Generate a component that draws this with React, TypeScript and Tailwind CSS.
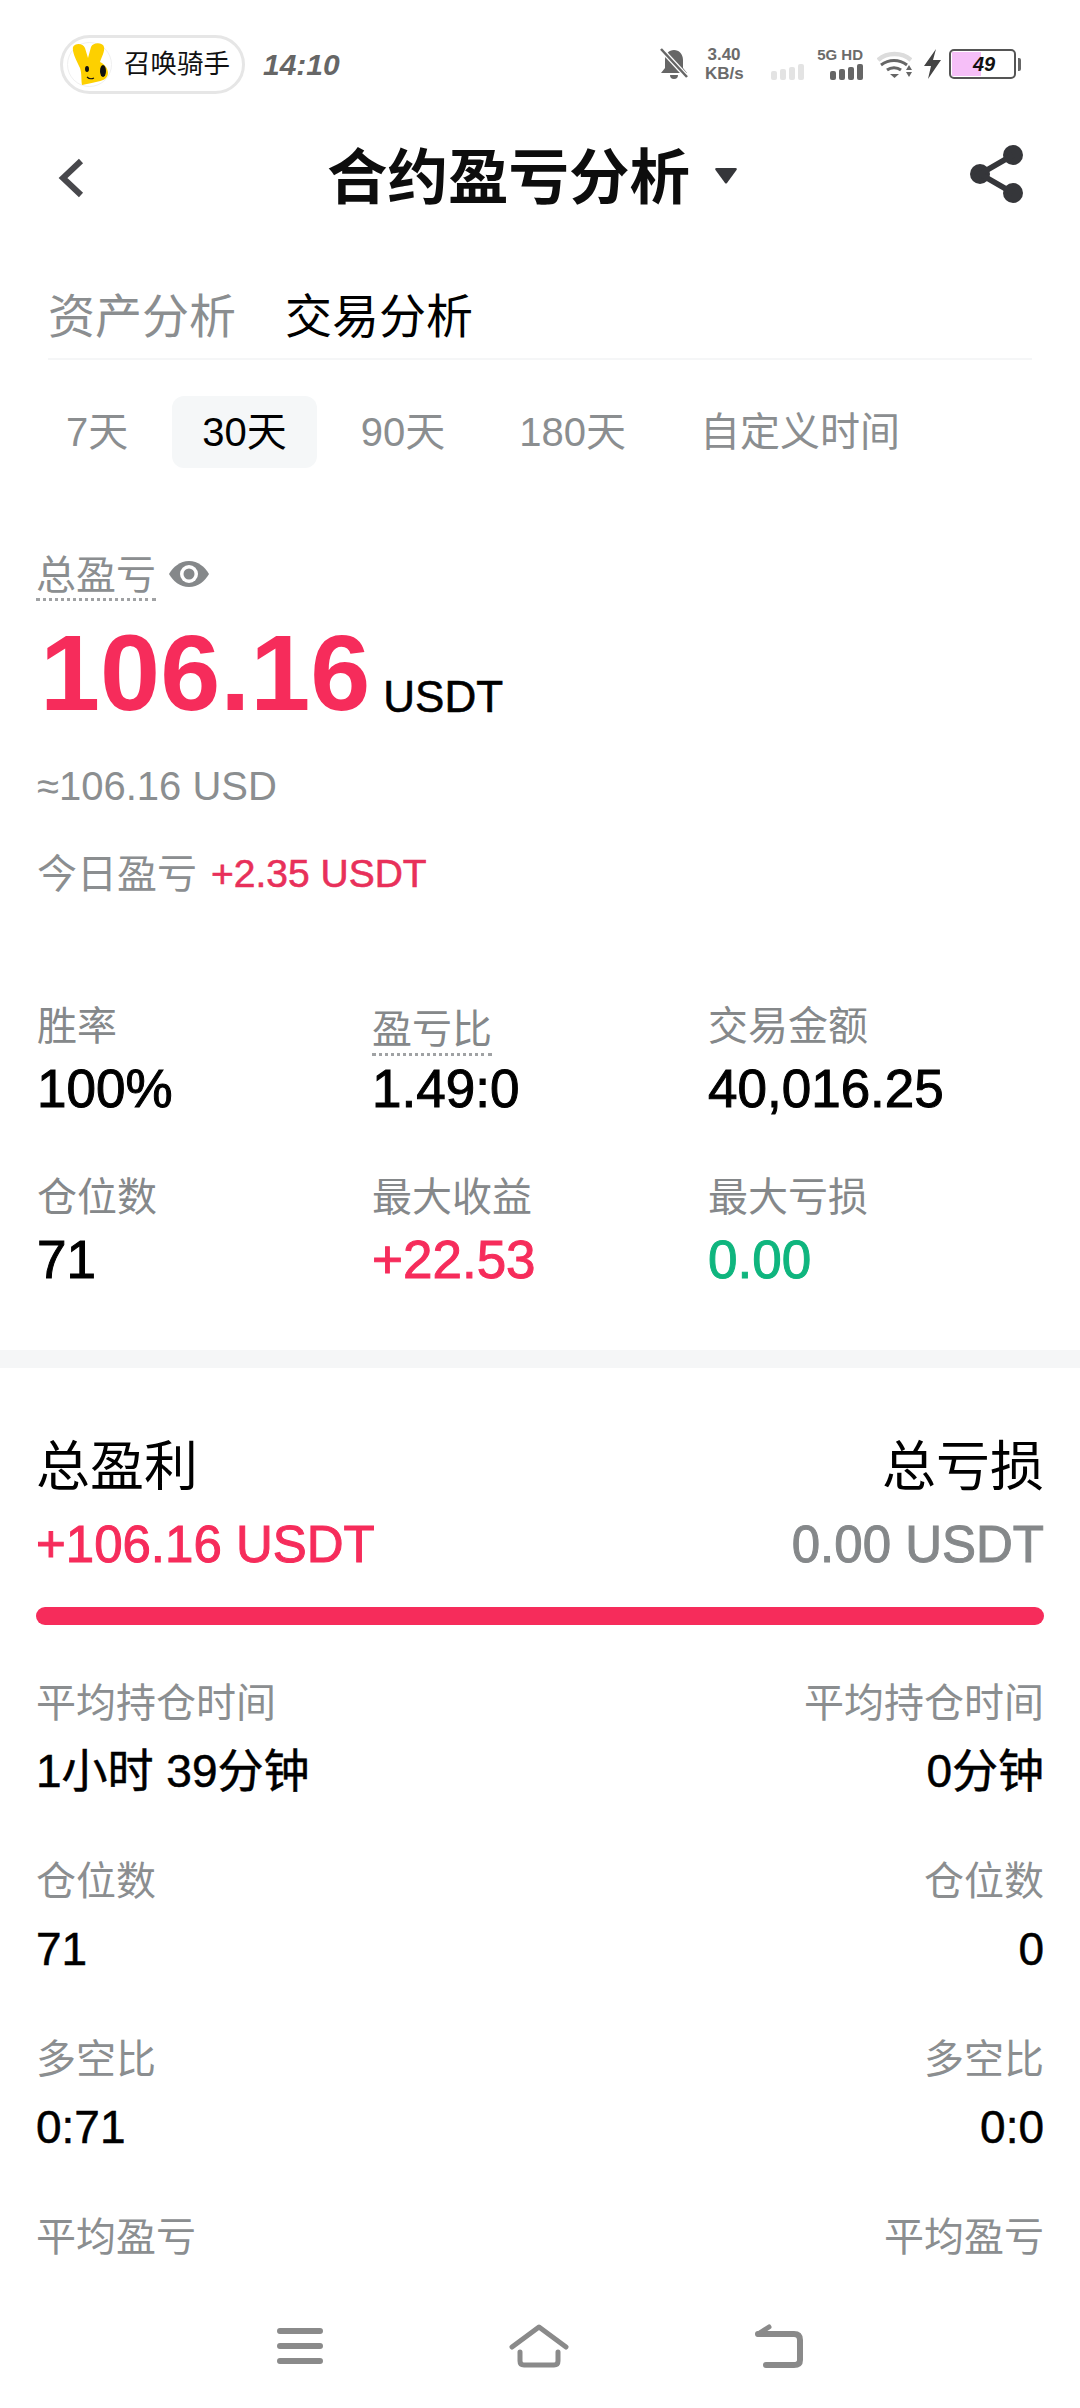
const cjk = "font-['Liberation_Sans','Noto_Sans_CJK_SC',sans-serif]";

const ranges = ['7天', '30天', '90天', '180天', '自定义时间'];

const stats = [
  { label: '胜率', value: '100%', color: 'text-black', dotted: false },
  { label: '盈亏比', value: '1.49:0', color: 'text-black', dotted: true },
  { label: '交易金额', value: '40,016.25', color: 'text-black', dotted: false },
  { label: '仓位数', value: '71', color: 'text-black', dotted: false },
  { label: '最大收益', value: '+22.53', color: 'text-[#f62c5b]', dotted: false },
  { label: '最大亏损', value: '0.00', color: 'text-[#0fb57e]', dotted: false },
];

const rows = [
  { label: '平均持仓时间', left: '1小时 39分钟', right: '0分钟' },
  { label: '仓位数', left: '71', right: '0' },
  { label: '多空比', left: '0:71', right: '0:0' },
];

function Mascot() {
  return (
    <svg width="36" height="42" viewBox="0 0 36 42">
      <path d="M1 4c2-4 10-4 12 1l3 10 3-11c2-5 12-5 13 0 1 5-3 11-4 15 4 2 8 6 8 11 0 6-6 8-12 9-4 1-9 2-14 3-1-5 0-11-2-17C5 18 0 10 1 4z" fill="#fdd000" />
      <ellipse cx="15" cy="26" rx="2" ry="3" fill="#111" />
      <ellipse cx="31" cy="28" rx="3" ry="6" fill="#111" />
      <path d="M15 34c2 2 5 2 7 1" stroke="#111" strokeWidth="1.1" fill="none" />
    </svg>
  );
}

function Bars({ color, gap }: { color: string; gap: string }) {
  return (
    <div className={`flex items-end ${gap}`}>
      <div className={`h-[9px] w-[6px] rounded-[2px] ${color}`} />
      <div className={`h-[11px] w-[6px] rounded-[2px] ${color}`} />
      <div className={`h-[13px] w-[6px] rounded-[2px] ${color}`} />
      <div className={`h-[16px] w-[6px] rounded-[2px] ${color}`} />
    </div>
  );
}

function StatusBar() {
  return (
    <div className="flex h-[126px] shrink-0 items-center justify-between pl-[60px] pr-[59px] pt-[2px]">
      <div className="flex items-center">
        <div className="flex h-[59px] w-[185px] items-center rounded-full border-[3px] border-[#e6e6e6] pl-[4px]">
          <div className="flex h-[45px] w-[45px] items-center justify-center rounded-full border border-[#f0f0f0]">
            <Mascot />
          </div>
          <span className="ml-[12px] text-[26.5px] leading-none text-[#111]">召唤骑手</span>
        </div>
        <span className="ml-[18px] text-[30px] font-bold italic text-[#666]">14:10</span>
      </div>
      <div className="flex items-center">
        <svg width="28" height="32" viewBox="0 0 28 32" fill="#666">
          <path d="M14 2c5 0 9 4 9 10v8l4 5H1l4-5v-8c0-6 4-10 9-10zM10 27h8a4 4 0 0 1-8 0z" />
          <path d="M1 1l26 28" stroke="#fff" strokeWidth="5" />
          <path d="M1 1l26 28" stroke="#666" strokeWidth="2.5" />
        </svg>
        <div className="ml-[17px] flex w-[38px] flex-col text-center text-[17px] font-bold leading-[19px] text-[#6b6b6b]">
          <span>3.40</span>
          <span>KB/s</span>
        </div>
        <div className="ml-[28px] flex h-[32px] w-[35px] items-end">
          <Bars color="bg-[#e3e3e3]" gap="gap-[3px]" />
        </div>
        <div className="ml-[9px] flex h-[32px] w-[48px] flex-col items-end justify-between">
          <span className="whitespace-nowrap text-[15px] font-bold leading-[14px] text-[#6b6b6b]">5G HD</span>
          <Bars color="bg-[#666]" gap="gap-[3px]" />
        </div>
        <svg className="ml-[14px]" width="35" height="28" viewBox="0 0 35 28" fill="none">
          <path d="M1 10C10 2 25 2 34 10" stroke="#dcdcdc" strokeWidth="4.5" />
          <path d="M4 15c8-6 18-6 26 0M10 20c4-3 10-3 14 0" stroke="#666" strokeWidth="3" />
          <path d="M13 24h9l-4.500 4zM29 20l3-5 3 5zM29 22h6l-3 5z" fill="#666" />
        </svg>
        <svg className="ml-[12px]" width="17" height="30" viewBox="0 0 17 30">
          <path d="M12 0L0 17h7l-3 13 13-19H9z" fill="#444" />
        </svg>
        <div className="ml-[8px] flex items-center">
          <div className="relative h-[30px] w-[67px] overflow-hidden rounded-[5px] border-[2px] border-[#555] p-[1px]">
            <div className="h-full w-[29px] bg-[#f6bff8]" />
            <span className="absolute inset-0 pl-[3px] text-center text-[20px] font-bold italic leading-[26px] text-[#111]">49</span>
          </div>
          <div className="ml-[2px] h-[13px] w-[3px] rounded-r-[2px] bg-[#666]" />
        </div>
      </div>
    </div>
  );
}

function Header() {
  return (
    <div className="flex h-[104px] shrink-0 items-center pl-[56px] pr-[57px]">
      <svg width="28" height="44" viewBox="0 0 28 44" fill="none">
        <path d="M25 5L7 22l18 17" stroke="#48484c" strokeWidth="6" />
      </svg>
      <span className="ml-[243px] text-[60.500px] font-bold leading-none text-[#0d0d0d]">合约盈亏分析</span>
      <svg className="mb-[5px] ml-[24px]" width="24" height="17" viewBox="0 0 24 17">
        <path d="M2.500 1h19q2 0 1 2L13 16q-1 1-2 0L1.500 3q-1-2 1-2z" fill="#35363a" />
      </svg>
      <svg className="mb-[8px] ml-auto" width="54" height="58" viewBox="0 0 54 58" fill="#35363a">
        <circle cx="44" cy="10" r="10" />
        <circle cx="11" cy="29" r="10" />
        <circle cx="44" cy="48" r="10" />
        <path d="M44 10L11 29l33 19" fill="none" stroke="#35363a" strokeWidth="5.500" />
      </svg>
    </div>
  );
}

function Stat({ label, value, color, dotted }: (typeof stats)[number]) {
  return (
    <div className="flex flex-col">
      <span className={`self-start text-[40px] leading-[48px] text-[#85888a] ${dotted ? 'mt-[3px] -mb-[6px] border-b-[3px] border-dotted border-[#a0a2a4]' : ''}`}>
        {label}
      </span>
      <span className={`mt-[9px] text-[53px] leading-[60px] [-webkit-text-stroke:1px_currentColor] ${color}`}>{value}</span>
    </div>
  );
}

export default function App() {
  return (
    <div className={`flex h-[2408px] w-[1080px] flex-col overflow-hidden bg-white ${cjk}`}>
      <StatusBar />
      <Header />

      <div className="mx-[48px] mt-[20px] flex h-[110px] shrink-0 items-start gap-[49px] border-b-[2px] border-[#f5f6f7] pt-[41px]">
        <span className="text-[47px] leading-[52px] text-[#8b8e90]">资产分析</span>
        <span className="text-[47px] leading-[52px] text-black">交易分析</span>
      </div>

      <div className="mt-[36px] flex h-[72px] shrink-0 items-center gap-[14px] pl-[36px]">
        {ranges.map((r) => (
          <div
            key={r}
            className={`flex h-[72px] items-center rounded-[12px] px-[30px] text-[40px] ${r === '30天' ? 'bg-[#f5f7f8] text-black' : 'text-[#8b8e90]'}`}
          >
            {r}
          </div>
        ))}
      </div>

      <div className="mt-[85px] flex shrink-0 items-center pl-[36px]">
        <span className="border-b-[3px] border-dotted border-[#a0a2a4] text-[40px] leading-[45px] text-[#8b8e90]">总盈亏</span>
        <svg className="mb-[6px] ml-[12px]" width="42" height="30" viewBox="0 0 42 30">
          <path d="M21 2c9 0 16 6 20 13-4 7-11 13-20 13S5 22 1 15C5 8 12 2 21 2z" fill="#85888a" />
          <circle cx="21" cy="15" r="9" fill="#fff" />
          <circle cx="21" cy="15" r="5.500" fill="#85888a" />
        </svg>
      </div>

      <div className="mt-[16px] flex shrink-0 items-end pl-[40px]">
        <span className="text-[108px] font-bold leading-[112px] text-[#f62c5b]">106.16</span>
        <span className="mb-[7px] ml-[13px] text-[44px] leading-[50px] text-black [-webkit-text-stroke:0.6px_currentColor]">USDT</span>
      </div>

      <div className="mt-[34px] shrink-0 pl-[37px] text-[40px] leading-[46px] text-[#8b8e90]">≈106.16 USD</div>

      <div className="mt-[41px] flex shrink-0 items-center pl-[37px] leading-[48px]">
        <span className="text-[40px] text-[#8b8e90]">今日盈亏</span>
        <span className="ml-[14px] text-[39px] text-[#e8305a] [-webkit-text-stroke:0.6px_currentColor]">+2.35 USDT</span>
      </div>

      <div className="mt-[104px] grid shrink-0 grid-cols-[335px_336px_1fr] gap-y-[54px] pl-[37px]">
        {stats.map((s) => (
          <Stat key={s.label} {...s} />
        ))}
      </div>

      <div className="mt-[60px] h-[18px] shrink-0 bg-[#f5f6f7]" />

      <div className="mt-[68px] flex flex-col px-[36px]">
        <div className="flex justify-between text-[54px] leading-[62px] text-black">
          <span>总盈利</span>
          <span>总亏损</span>
        </div>
        <div className="mt-[17px] flex justify-between text-[51px] leading-[60px] [-webkit-text-stroke:1px_currentColor]">
          <span className="text-[#f62c5b]">+106.16 USDT</span>
          <span className="text-[#85888a]">0.00 USDT</span>
        </div>
        <div className="mt-[32px] h-[18px] rounded-full bg-[#f62c5b]" />

        <div className="mt-[54px] flex flex-col gap-[60px]">
          {rows.map((row) => (
            <div key={row.label} className="flex flex-col">
              <div className="flex justify-between text-[40px] leading-[48px] text-[#8b8e90]">
                <span>{row.label}</span>
                <span>{row.label}</span>
              </div>
              <div className="mt-[18px] flex justify-between text-[46px] leading-[52px] text-black [-webkit-text-stroke:0.5px_currentColor]">
                <span>{row.left}</span>
                <span>{row.right}</span>
              </div>
            </div>
          ))}
          <div className="flex justify-between text-[40px] leading-[48px] text-[#8b8e90]">
            <span>平均盈亏</span>
            <span>平均盈亏</span>
          </div>
        </div>
      </div>

      <div className="mt-auto flex h-[84px] shrink-0 items-start bg-white pl-[277px]">
        <svg className="mt-[3px]" width="46" height="38" viewBox="0 0 46 38">
          <path d="M3 4h40M3 19h40M3 34h40" stroke="#8a8a8a" strokeWidth="6" strokeLinecap="round" />
        </svg>
        <svg className="ml-[186px]" width="60" height="44" viewBox="0 0 60 44" fill="none">
          <path d="M3 23L30 3l27 20" stroke="#8a8a8a" strokeWidth="5" strokeLinecap="round" strokeLinejoin="round" />
          <path d="M11 28v9q0 4 4 4h30q4 0 4-4v-9" stroke="#8a8a8a" strokeWidth="5" strokeLinecap="round" />
        </svg>
        <svg className="ml-[186px]" width="48" height="44" viewBox="0 0 48 44" fill="none">
          <path d="M3 10h36q6 0 6 6v20q0 5-6 5H11" stroke="#8a8a8a" strokeWidth="6" strokeLinecap="round" />
          <path d="M3 10l11-7" stroke="#8a8a8a" strokeWidth="5" strokeLinecap="round" />
        </svg>
      </div>
    </div>
  );
}
